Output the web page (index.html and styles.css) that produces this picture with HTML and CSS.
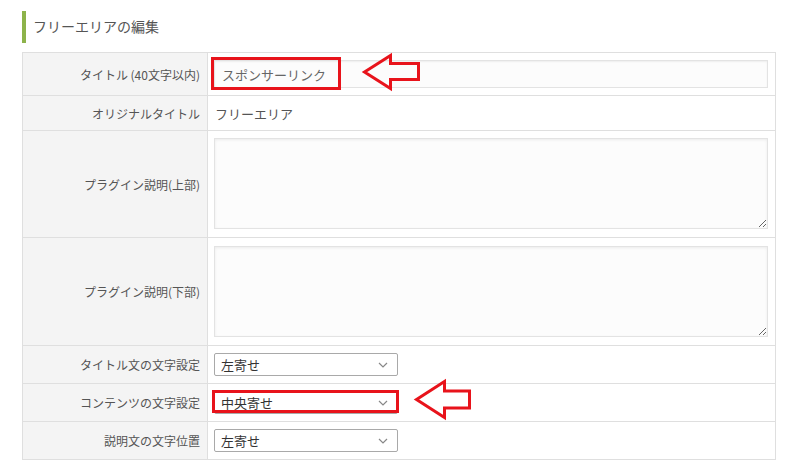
FILE: index.html
```html
<!DOCTYPE html>
<html lang="ja">
<head>
<meta charset="utf-8">
<title>フリーエリアの編集</title>
<link rel="stylesheet" href="styles.css">
</head>
<body>
<div class="page">
  <h2 class="heading">フリーエリアの編集</h2>
  <div class="form">
    <div class="label r1">タイトル (40文字以内)</div>
    <div class="value r1"><input class="text" type="text" value="スポンサーリンク"></div>

    <div class="label r2">オリジナルタイトル</div>
    <div class="value r2"><span class="plain">フリーエリア</span></div>

    <div class="label r3">プラグイン説明(上部)</div>
    <div class="value r3"><textarea class="area"></textarea></div>

    <div class="label r4">プラグイン説明(下部)</div>
    <div class="value r4"><textarea class="area"></textarea></div>

    <div class="label r5">タイトル文の文字設定</div>
    <div class="value r5"><div class="select"><span>左寄せ</span><svg class="chev" width="10" height="6" viewBox="0 0 10 6"><path d="M1 1 L5 5 L9 1" fill="none" stroke="#888" stroke-width="1.2"/></svg></div></div>

    <div class="label r5">コンテンツの文字設定</div>
    <div class="value r5"><div class="select"><span>中央寄せ</span><svg class="chev" width="10" height="6" viewBox="0 0 10 6"><path d="M1 1 L5 5 L9 1" fill="none" stroke="#888" stroke-width="1.2"/></svg></div></div>

    <div class="label r5">説明文の文字位置</div>
    <div class="value r5"><div class="select"><span>左寄せ</span><svg class="chev" width="10" height="6" viewBox="0 0 10 6"><path d="M1 1 L5 5 L9 1" fill="none" stroke="#888" stroke-width="1.2"/></svg></div></div>
  </div>
</div>
<svg class="marks" width="800" height="461" viewBox="0 0 800 461">
  <rect x="212.5" y="58.5" width="127" height="30" fill="none" stroke="#e8131b" stroke-width="3"/>
  <polygon points="364.5,72 390.5,55.5 390.5,63.5 418.5,63.5 418.5,79.5 390.5,79.5 390.5,88.5" fill="none" stroke="#e8131b" stroke-width="3" stroke-linejoin="miter"/>
  <rect x="213.5" y="391.5" width="184" height="20" fill="none" stroke="#e8131b" stroke-width="3"/>
  <polygon points="416.5,399.5 444.5,381.5 444.5,391 469.5,391 469.5,408 444.5,408 444.5,417.5" fill="none" stroke="#e8131b" stroke-width="3" stroke-linejoin="miter"/>
</svg>
</body>
</html>
```
FILE: styles.css
```css
html, body {
  margin: 0;
  padding: 0;
  background: #fff;
}
body {
  position: relative;
  width: 800px;
  height: 461px;
  overflow: hidden;
  font-family: "Noto Sans CJK JP", "Noto Sans", sans-serif;
  color: #555;
}
.page {
  padding: 11px 24px 0 22px;
}
.heading {
  margin: 0 0 9px 0;
  height: 32px;
  line-height: 30px;
  border-left: 4px solid #8db34a;
  padding-left: 7px;
  font-size: 14px;
  font-weight: normal;
  color: #555;
}
.form {
  width: 754px;
  box-sizing: border-box;
  display: grid;
  grid-template-columns: 185px 1fr;
  border: 1px solid #dfdfdf;
  border-bottom: none;
}
.label, .value {
  box-sizing: border-box;
  border-bottom: 1px solid #dfdfdf;
  display: flex;
  align-items: center;
}
.label {
  background: #f4f4f4;
  border-right: 1px solid #dfdfdf;
  justify-content: flex-end;
  padding-right: 7px;
  font-size: 12px;
  color: #555;
}
.value {
  padding: 0 7px 0 6px;
}
.r1 { height: 43px; }
.r2 { height: 35px; }
.r3 { height: 107px; align-items: flex-start; }
.r4 { height: 108px; align-items: flex-start; }
.r5 { height: 38px; }
.label.r3, .label.r4 { align-items: center; }
.value.r3 { padding-top: 7px; }
.value.r4 { padding-top: 8px; }
.text {
  box-sizing: border-box;
  width: 100%;
  height: 28px;
  margin: 0;
  border: 1px solid #e3e3e3;
  box-shadow: inset 0 1px 2px rgba(0,0,0,0.06);
  background: #fcfcfc;
  padding: 0 7px;
  font-family: "Noto Sans CJK JP", sans-serif;
  font-size: 13px;
  color: #666;
  outline: none;
}
.plain {
  font-size: 13px;
  color: #555;
  padding-left: 1px;
}
.area {
  box-sizing: border-box;
  display: block;
  width: 100%;
  height: 91px;
  margin: 0;
  border: 1px solid #e3e3e3;
  box-shadow: inset 0 1px 3px rgba(0,0,0,0.07);
  background: #fcfcfc;
  resize: vertical;
  font-family: "Noto Sans CJK JP", sans-serif;
}
.select {
  box-sizing: border-box;
  width: 184px;
  height: 23px;
  border: 1px solid #a9a9a9;
  border-radius: 2px;
  background: #fff;
  display: flex;
  align-items: center;
  justify-content: space-between;
  padding: 0 9px 0 6px;
  font-size: 13px;
  color: #333;
}
.chev {
  display: block;
}
.marks {
  position: absolute;
  top: 0;
  left: 0;
  pointer-events: none;
}
```
